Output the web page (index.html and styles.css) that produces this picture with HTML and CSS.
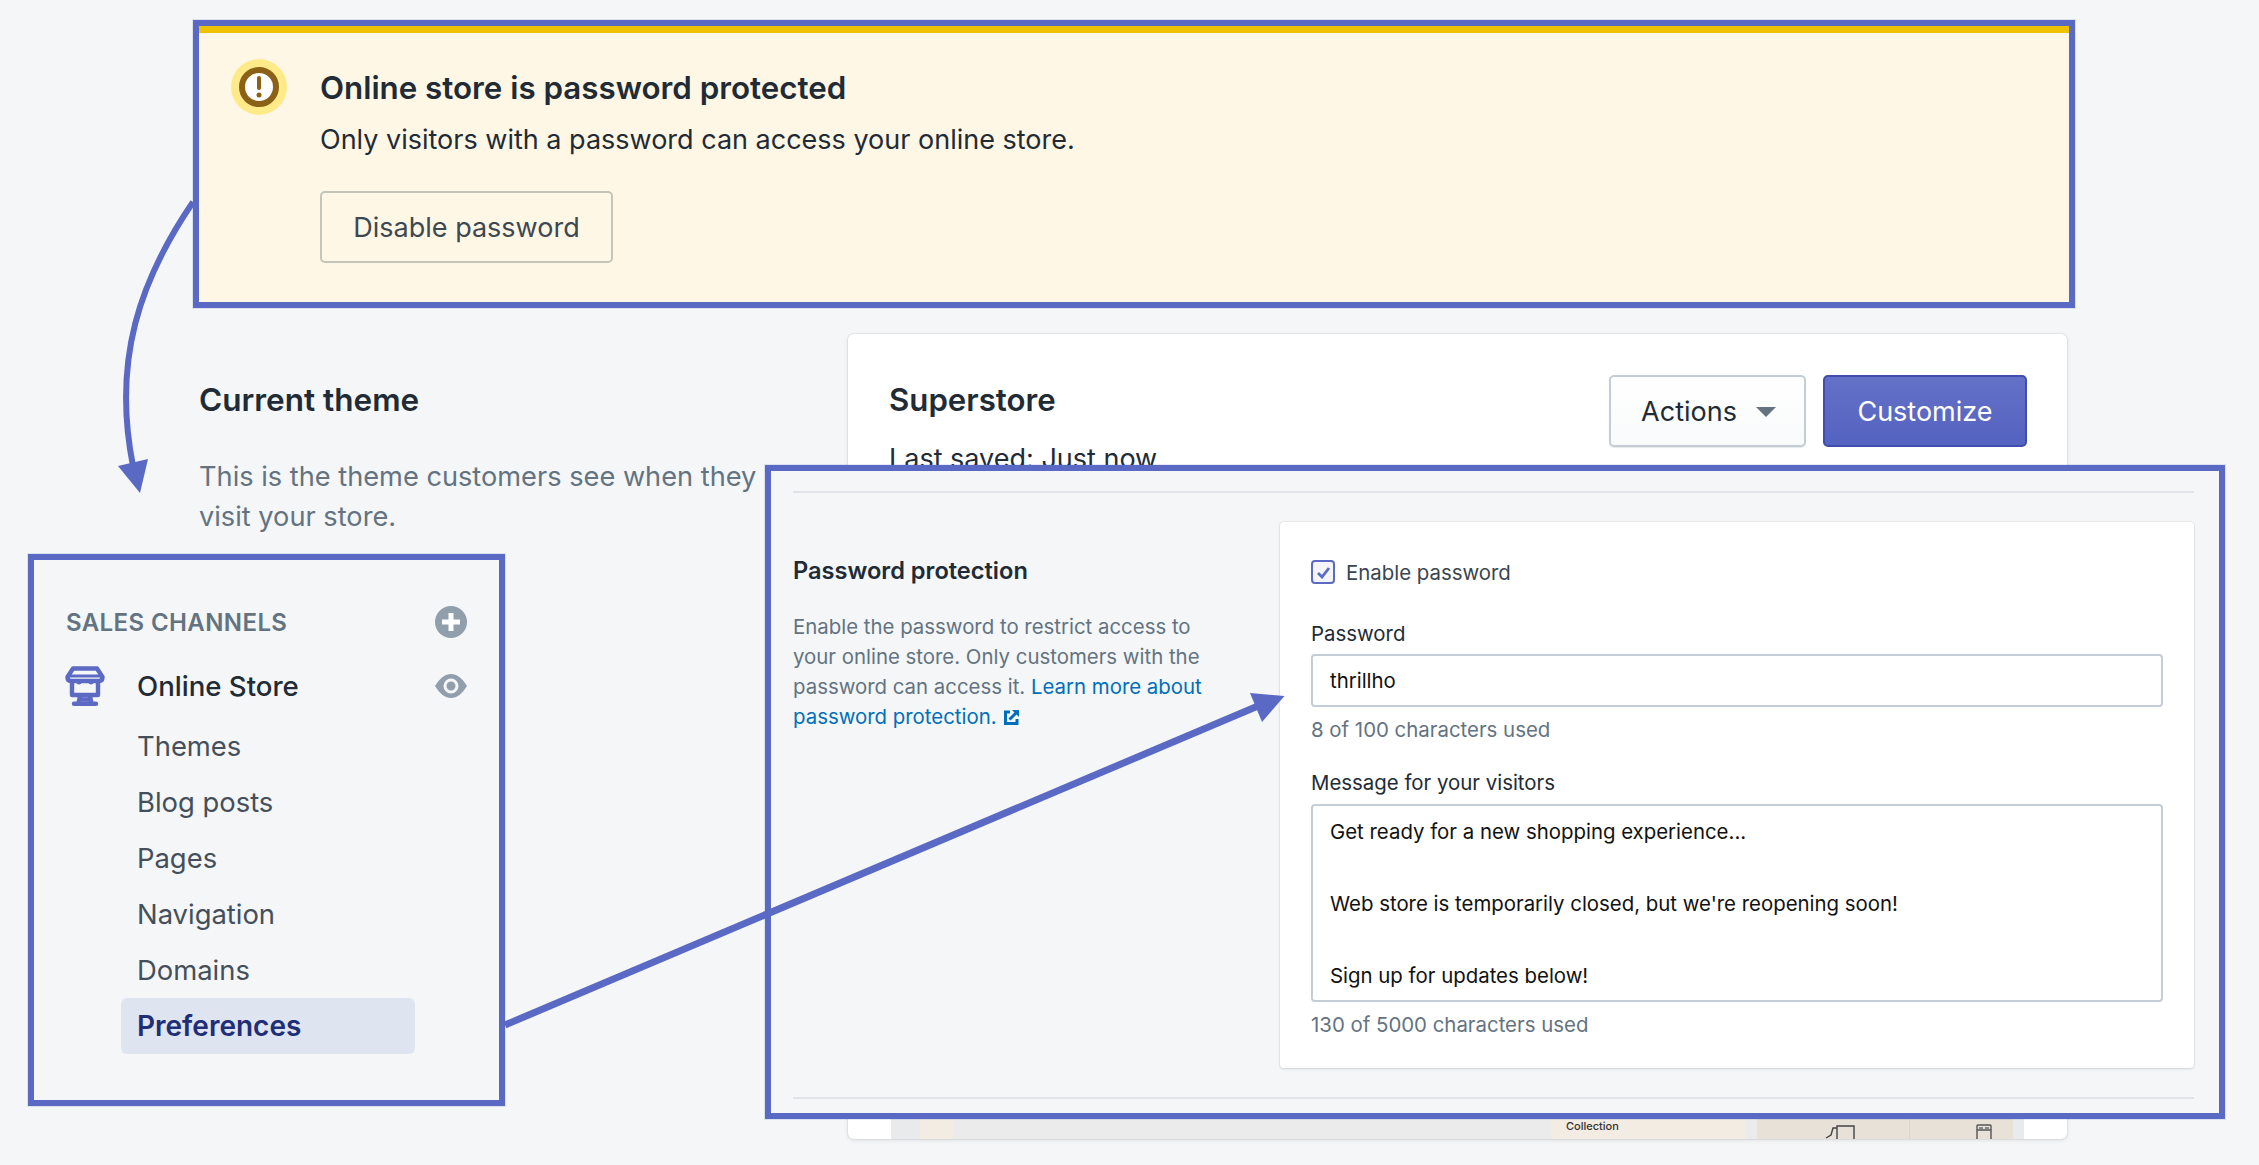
FILE: index.html
```html
<!DOCTYPE html>
<html lang="en">
<head>
<meta charset="utf-8">
<title>Online store preferences</title>
<link rel="stylesheet" href="styles.css">
</head>
<body>
<main class="page">
  <section class="intro">
    <h2 class="intro-title">Current theme</h2>
    <p class="intro-text">This is the theme customers see when they visit your store.</p>
  </section>
  <section class="theme-card">
    <header class="theme-head">
      <div class="theme-info">
        <h2 class="theme-name">Superstore</h2>
        <p class="theme-saved">Last saved: Just now</p>
      </div>
      <div class="theme-actions">
        <button class="btn btn-actions">Actions<span class="caret"></span></button>
        <button class="btn btn-primary">Customize</button>
      </div>
    </header>
    <div class="preview">
      <div class="seg seg-edge"></div>
      <div class="seg seg-cream-a"></div>
      <div class="seg seg-grey-a"></div>
      <div class="seg seg-cream-b"><span class="collection">Collection</span></div>
      <div class="seg seg-grey-b"></div>
      <div class="seg seg-beige">
        <div class="beige-cell beige-left">
          <svg class="product" width="30" height="14" viewBox="0 0 30 14"><path d="M1 13 L6 10 L8 3 H12 M12 14 V1 H29 V14" fill="none" stroke="#444" stroke-width="1.4"/></svg>
        </div>
        <div class="beige-cell beige-right">
          <svg class="product" width="16" height="16" viewBox="0 0 16 16"><path d="M1 16 V2 Q1 1 2 1 H14 Q15 1 15 2 V16 M1 6 H15" fill="none" stroke="#555" stroke-width="1.4"/><rect x="3" y="3" width="4" height="2" fill="#888"/><rect x="9" y="3" width="4" height="2" fill="#888"/></svg>
        </div>
      </div>
      <div class="seg seg-edge"></div>
    </div>
  </section>
</main>

<aside class="callout banner">
  <span class="banner-icon">
    <svg width="56" height="56" viewBox="0 0 56 56"><circle cx="28" cy="28" r="28" fill="#ffea8a"/><circle cx="28" cy="28" r="17" fill="#fff" stroke="#8a6116" stroke-width="6"/><rect x="26" y="17" width="4" height="14" rx="2" fill="#8a6116"/><circle cx="28" cy="36" r="2.5" fill="#8a6116"/></svg>
  </span>
  <div class="banner-body">
    <h2 class="banner-title">Online store is password protected</h2>
    <p class="banner-text">Only visitors with a password can access your online store.</p>
    <button class="btn-outline">Disable password</button>
  </div>
</aside>

<nav class="callout channels">
  <div class="channels-head">
    <span class="channels-title">SALES CHANNELS</span>
    <svg width="32" height="32" viewBox="0 0 32 32"><circle cx="16" cy="16" r="16" fill="#919eab"/><path d="M16 7 V25 M7 16 H25" stroke="#fff" stroke-width="5"/></svg>
  </div>
  <div class="store-row">
    <svg class="store-icon" width="40" height="40" viewBox="0 0 40 40" fill="none" stroke="#5c6ac4" stroke-width="4.4" stroke-linejoin="round" stroke-linecap="round"><path d="M8 2.5 H32 L37.5 11 Q37.5 15 34 15 H6 Q2.5 15 2.5 11 Z"/><path d="M3 10 H37" stroke-width="3"/><path d="M7 17 V29 H33 V17"/><path d="M15 30 L13.5 37.5 M25 30 L26.5 37.5 M17 33.5 H23"/><path d="M9 37.8 H31"/><path d="M12 15 Q14 19 16 15 M24 15 Q26 19 28 15" stroke-width="3"/></svg>
    <span class="store-name">Online Store</span>
    <svg width="32" height="24" viewBox="0 0 32 24"><path d="M0 12 C5 4 10 0 16 0 C22 0 27 4 32 12 C27 20 22 24 16 24 C10 24 5 20 0 12 Z" fill="#919eab"/><circle cx="16" cy="12" r="6" fill="none" stroke="#f4f6f8" stroke-width="3"/></svg>
  </div>
  <ul class="channel-list">
    <li class="channel-item">Themes</li>
    <li class="channel-item">Blog posts</li>
    <li class="channel-item">Pages</li>
    <li class="channel-item">Navigation</li>
    <li class="channel-item">Domains</li>
    <li class="channel-item is-active">Preferences</li>
  </ul>
</nav>

<aside class="callout password">
  <div class="rule"></div>
  <div class="pw-layout">
    <div class="pw-intro">
      <h3 class="pw-title">Password protection</h3>
      <p class="pw-text">Enable the password to restrict access to your online store. Only customers with the password can access it. <a class="pw-link">Learn more about password protection.</a>
        <svg class="ext-icon" width="15" height="15" viewBox="0 0 15 15"><path d="M6 2 H1.5 V13.5 H13 V9" fill="none" stroke="#006fbb" stroke-width="3"/><path d="M5.5 9.5 L12 3" stroke="#006fbb" stroke-width="3"/><path d="M8 0 H15 V7 Z" fill="#006fbb"/></svg>
      </p>
    </div>
    <form class="pw-form">
      <div class="check-row">
        <span class="checkbox"><svg width="15" height="13" viewBox="0 0 15 13"><path d="M2 7 L6 11 L13 2" fill="none" stroke="#5c6ac4" stroke-width="2.8"/></svg></span>
        <span class="check-label">Enable password</span>
      </div>
      <div class="field-label first-label">Password</div>
      <div class="text-input" role="textbox">thrillho</div>
      <div class="hint">8 of 100 characters used</div>
      <div class="field-label second-label">Message for your visitors</div>
      <div class="text-area" role="textbox">
        <div>Get ready for a new shopping experience...</div>
        <div>&nbsp;</div>
        <div>Web store is temporarily closed, but we're reopening soon!</div>
        <div>&nbsp;</div>
        <div>Sign up for updates below!</div>
      </div>
      <div class="hint">130 of 5000 characters used</div>
    </form>
  </div>
  <div class="rule rule-bottom"></div>
</aside>

<svg class="arrows" width="2259" height="1165" viewBox="0 0 2259 1165" fill="none">
  <path d="M193 202 C140 280 112 360 133 466" stroke="#5a69c4" stroke-width="6"/>
  <path d="M118 466 L148 459 L140 493 Z" fill="#5a69c4"/>
  <path d="M505 1025 L1258 706" stroke="#5a69c4" stroke-width="7"/>
  <path d="M1250 693 L1284.5 696 L1262 722 Z" fill="#5a69c4"/>
</svg>
</body>
</html>
```
FILE: styles.css
```css
* { box-sizing: border-box; }
html, body { margin: 0; padding: 0; }
body {
  width: 2259px;
  height: 1165px;
  overflow: hidden;
  position: relative;
  background: #f4f6f8;
  font-family: Inter, "Liberation Sans", sans-serif;
  color: #212b36;
}
h2, h3, p, ul { margin: 0; padding: 0; }
button { font-family: inherit; cursor: pointer; }

/* base page */
.page {
  display: flex;
  height: 1139px;
  padding: 334px 192px 0 199px;
  align-items: stretch;
}
.intro { width: 649px; padding-top: 46px; flex: none; }
.intro-title { font-size: 31.5px; line-height: 40px; font-weight: 600; }
.intro-text { font-size: 27.2px; line-height: 40px; color: #637381; width: 600px; margin-top: 37px; }

.theme-card {
  flex: 1;
  background: #fff;
  border-radius: 6px;
  box-shadow: 0 0 0 1px rgba(63,63,68,.05), 0 1px 4px rgba(63,63,68,.15);
  display: flex;
  flex-direction: column;
  overflow: hidden;
}
.theme-head {
  display: flex;
  justify-content: space-between;
  padding: 41px 40px 0 41px;
}
.theme-name { font-size: 31.2px; line-height: 40px; font-weight: 600; margin-top: 5px; }
.theme-saved { font-size: 27px; line-height: 40px; margin-top: 19px; }
.theme-actions { display: flex; gap: 17px; }
.btn {
  height: 72px;
  border-radius: 5px;
  font-size: 27px;
  display: flex;
  align-items: center;
  justify-content: center;
  border: 2px solid;
}
.btn-actions {
  width: 197px;
  padding-left: 8px;
  color: #212b36;
  background: linear-gradient(#fff, #f9fafb);
  border-color: #c4cdd5;
  box-shadow: 0 1px 1px rgba(22,29,37,.1);
}
.caret {
  width: 0; height: 0;
  margin-left: 19px;
  margin-top: 2px;
  border-left: 10px solid transparent;
  border-right: 10px solid transparent;
  border-top: 10px solid #637381;
}
.btn-primary {
  width: 204px;
  color: #fff;
  background: linear-gradient(#6371c7, #5563c1);
  border-color: #3f4eae;
}

.preview {
  margin-top: auto;
  margin-left: 43px;
  margin-right: 43px;
  height: 20px;
  display: flex;
  flex: none;
  overflow: hidden;
}
.seg { flex: none; height: 100%; }
.seg-edge { width: 11px; background: #e8eaec; }
.seg-edge:first-child { width: 29px; }
.seg-cream-a { width: 33px; background: #f3ece3; }
.seg-grey-a { width: 598px; background: #ebebeb; }
.seg-cream-b { width: 195px; background: #f3ece3; padding-left: 15px; }
.seg-grey-b { width: 11px; background: #ebebeb; }
.seg-beige { width: 256px; background: #e8e1d8; display: flex; }
.collection { font-size: 11px; line-height: 14px; font-weight: 500; color: #333; display: block; }
.beige-cell { height: 100%; padding-top: 6px; display: flex; }
.beige-left { width: 153px; border-right: 1px solid #dcd5cc; padding-left: 68px; }
.beige-right { flex: 1; padding-left: 66px; padding-top: 5px; }

/* annotation callouts */
.callout {
  position: absolute;
  border: 6px solid #5a69c4;
  background: #f4f6f8;
  box-shadow: 0 0 0 1px rgba(90,105,196,.15);
}
.arrows { position: absolute; left: 0; top: 0; pointer-events: none; }

.banner {
  left: 193px; top: 20px; width: 1882px; height: 288px;
  background: #fff7e5;
  display: flex;
  padding: 33px 32px 0;
  gap: 33px;
}
.banner::before {
  content: "";
  position: absolute;
  left: 0; right: 0; top: 0;
  height: 7px;
  background: #eec200;
}
.banner-icon { flex: none; height: 56px; }
.banner-title { font-size: 31.3px; line-height: 40px; font-weight: 600; margin-top: 9px; }
.banner-text { font-size: 27px; line-height: 40px; margin-top: 12px; }
.btn-outline {
  display: block;
  width: 293px; height: 72px;
  margin-top: 31px;
  background: transparent;
  border: 2px solid #c4c4b8;
  border-radius: 5px;
  font-size: 27px;
  color: #3d4852;
}

.channels {
  left: 28px; top: 554px; width: 477px; height: 552px;
  padding: 46px 32px 0 32px;
}
.channels-head { display: flex; justify-content: space-between; align-items: center; height: 32px; }
.channels-title { font-size: 24px; font-weight: 600; color: #637381; letter-spacing: .4px; }
.store-row { display: flex; align-items: center; height: 40px; margin-top: 28px; }
.store-icon { margin-left: -1px; flex: none; }
.store-name { flex: 1; font-size: 27.6px; font-weight: 500; margin-left: 32px; }
.channel-list { list-style: none; margin: 12px 0 0 55px; width: 294px; }
.channel-item {
  height: 56px;
  line-height: 56px;
  padding-left: 16px;
  font-size: 27.4px;
  color: #454f5b;
  border-radius: 6px;
}
.channel-item.is-active { background: #dfe5f0; color: #202e78; font-weight: 600; font-size: 28px; }

.password {
  left: 765px; top: 465px; width: 1460px; height: 654px;
  padding: 20px 25px 0 22px;
  display: flex;
  flex-direction: column;
}
.rule { height: 2px; background: #e1e3e8; flex: none; }
.rule-bottom { margin-top: 29px; }
.pw-layout { display: flex; margin-top: 29px; }
.pw-intro { width: 487px; flex: none; padding-top: 34px; }
.pw-title { font-size: 23.6px; line-height: 30px; font-weight: 600; }
.pw-text { font-size: 20.4px; line-height: 30px; color: #637381; margin-top: 26px; width: 420px; }
.pw-link { color: #006fbb; }
.ext-icon { margin-left: 2px; vertical-align: -1px; }
.pw-form {
  flex: 1;
  background: #fff;
  border-radius: 4px;
  box-shadow: 0 0 0 1px rgba(63,63,68,.05), 0 1px 3px rgba(63,63,68,.15);
  padding: 38px 31px 0;
  height: 546px;
}
.check-row { display: flex; align-items: center; gap: 11px; height: 24px; }
.checkbox {
  width: 24px; height: 24px;
  border: 2px solid #5c6ac4;
  border-radius: 4px;
  background: #f4f5fa;
  display: flex; align-items: center; justify-content: center;
}
.check-label { font-size: 20.4px; color: #3a4550; }
.field-label { font-size: 20.4px; line-height: 28px; }
.first-label { margin-top: 36px; }
.second-label { margin-top: 25px; }
.text-input, .text-area {
  border: 2px solid #c4cdd5;
  border-radius: 4px;
  background: #fff;
  color: #111;
  font-size: 20.4px;
  margin-top: 6px;
  padding-left: 17px;
}
.text-input { height: 53px; line-height: 49px; }
.text-area { height: 198px; line-height: 36px; padding-top: 8px; margin-top: 7px; }
.hint { font-size: 20.4px; line-height: 28px; color: #637381; margin-top: 9px; }
```
